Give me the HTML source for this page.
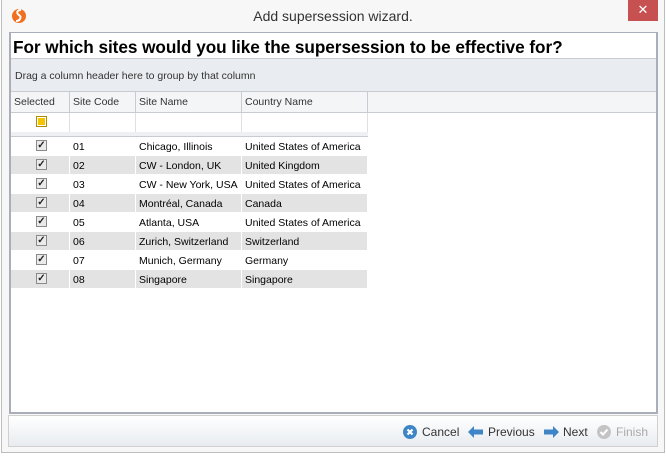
<!DOCTYPE html>
<html><head><style>
*{margin:0;padding:0;box-sizing:border-box}
body{width:666px;height:457px;background:#fff;font-family:"Liberation Sans",sans-serif;position:relative;overflow:hidden}
.win{position:absolute;left:1px;top:0;width:664px;height:453px;border:1px solid #bdbdbd;border-top:none;background:#f7f7f7}
.title{position:absolute;left:0;top:8px;width:666px;text-align:center;font-size:14px;color:#333}
.close{position:absolute;left:628px;top:0;width:30px;height:21px;background:#c75050;color:#fff;text-align:center;font-size:13px;line-height:20px}
.panel{position:absolute;left:9px;top:32px;width:649px;height:382px;border:2px solid #a9aeb8;border-top:1px solid #a9aeb8;background:#fff}
.h1{position:absolute;left:2px;top:4px;font-size:17.2px;font-weight:bold;color:#000;letter-spacing:-0.05px}
.group{position:absolute;left:0;top:25px;width:645px;height:34px;background:#e9ecf0;border-top:1px solid #c8ccd2;border-bottom:1px solid #c8ccd2;font-size:10.5px;color:#333;padding:11px 4px}
.hdr{position:absolute;left:0;top:59px;width:645px;height:21px;background:#f4f5f7;border-bottom:1px solid #c8ccd2}
.hdr div,.cell{position:absolute;top:0;height:100%;border-right:1px solid #c8ccd2;font-size:10.5px;color:#333;padding:4px 3px 3px}
.row{position:absolute;left:0;width:357px;height:19px;border-bottom:1px solid #fff}
.row .cell{padding:4px 3px 3px;color:#000;border-right:1px solid #fff}
.g{background:#e3e3e3}
.cb{position:absolute;left:25px;top:3px;width:11px;height:11px;border:1px solid #8a8a8a;background:#eaeaea;font-size:10px;line-height:9px;text-align:center;color:#222;font-weight:bold}
.bar{position:absolute;left:8px;top:415px;width:650px;height:32px;border:1px solid #d0d0d0;background:linear-gradient(#fff,#e8ecf0)}
.btn{position:absolute;top:9px;font-size:12px;color:#333}
</style></head><body>
<div class="win"></div>
<svg style="position:absolute;left:11px;top:7px" width="16" height="18" viewBox="0 0 16 18"><circle cx="8" cy="9" r="7" fill="#f07020"/><path d="M10 3 C6 3 5 6 8 8 C11 10 9 14 5 14" stroke="#fff" stroke-width="2" fill="none"/></svg>
<div class="title">Add supersession wizard.</div>
<div class="close">✕</div>
<div class="panel">
<div class="h1">For which sites would you like the supersession to be effective for?</div>
<div class="group">Drag a column header here to group by that column</div>
<div class="hdr">
<div style="left:0;width:59px">Selected</div><div style="left:59px;width:66px">Site Code</div><div style="left:125px;width:106px">Site Name</div><div style="left:231px;width:126px">Country Name</div>
</div>
<div class="row" style="top:80px;height:19px;border-bottom:none">
<div class="cell" style="left:0;width:59px;border-right:1px solid #e0e0e0"><div class="cb" style="background:#f5c400;border-color:#b08a00;box-shadow:inset 0 0 0 1px #fff"></div></div>
<div class="cell" style="left:59px;width:66px;border-right:1px solid #e0e0e0"></div><div class="cell" style="left:125px;width:106px;border-right:1px solid #e0e0e0"></div><div class="cell" style="left:231px;width:126px;border-right:1px solid #e0e0e0"></div>
</div>
<div style="position:absolute;left:0;top:99px;width:357px;height:5px;background:#eef0f3;border-bottom:1px solid #c8ccd2"></div>
<div class="row" style="top:104px"><div class="cell" style="left:0;width:59px"><div class="cb">✓</div></div><div class="cell" style="left:59px;width:66px">01</div><div class="cell" style="left:125px;width:106px">Chicago, Illinois</div><div class="cell" style="left:231px;width:126px">United States of America</div></div>
<div class="row g" style="top:123px"><div class="cell" style="left:0;width:59px"><div class="cb">✓</div></div><div class="cell" style="left:59px;width:66px">02</div><div class="cell" style="left:125px;width:106px">CW - London, UK</div><div class="cell" style="left:231px;width:126px">United Kingdom</div></div>
<div class="row" style="top:142px"><div class="cell" style="left:0;width:59px"><div class="cb">✓</div></div><div class="cell" style="left:59px;width:66px">03</div><div class="cell" style="left:125px;width:106px">CW - New York, USA</div><div class="cell" style="left:231px;width:126px">United States of America</div></div>
<div class="row g" style="top:161px"><div class="cell" style="left:0;width:59px"><div class="cb">✓</div></div><div class="cell" style="left:59px;width:66px">04</div><div class="cell" style="left:125px;width:106px">Montréal, Canada</div><div class="cell" style="left:231px;width:126px">Canada</div></div>
<div class="row" style="top:180px"><div class="cell" style="left:0;width:59px"><div class="cb">✓</div></div><div class="cell" style="left:59px;width:66px">05</div><div class="cell" style="left:125px;width:106px">Atlanta, USA</div><div class="cell" style="left:231px;width:126px">United States of America</div></div>
<div class="row g" style="top:199px"><div class="cell" style="left:0;width:59px"><div class="cb">✓</div></div><div class="cell" style="left:59px;width:66px">06</div><div class="cell" style="left:125px;width:106px">Zurich, Switzerland</div><div class="cell" style="left:231px;width:126px">Switzerland</div></div>
<div class="row" style="top:218px"><div class="cell" style="left:0;width:59px"><div class="cb">✓</div></div><div class="cell" style="left:59px;width:66px">07</div><div class="cell" style="left:125px;width:106px">Munich, Germany</div><div class="cell" style="left:231px;width:126px">Germany</div></div>
<div class="row g" style="top:237px"><div class="cell" style="left:0;width:59px"><div class="cb">✓</div></div><div class="cell" style="left:59px;width:66px">08</div><div class="cell" style="left:125px;width:106px">Singapore</div><div class="cell" style="left:231px;width:126px">Singapore</div></div>
</div>
<div class="bar">
<svg style="position:absolute;left:394px;top:9px" width="14" height="14"><circle cx="7" cy="7" r="7" fill="#3d85c6"/><path d="M4.5 4.5L9.5 9.5M9.5 4.5L4.5 9.5" stroke="#fff" stroke-width="2.2"/></svg>
<span class="btn" style="left:413px">Cancel</span>
<svg style="position:absolute;left:459px;top:10px" width="16" height="12"><path d="M0 6L6 0V3.5H15V8.5H6V12Z" fill="#3d85c6"/></svg>
<span class="btn" style="left:479px">Previous</span>
<svg style="position:absolute;left:534px;top:10px" width="16" height="12"><path d="M16 6L10 0V3.5H1V8.5H10V12Z" fill="#3d85c6"/></svg>
<span class="btn" style="left:554px">Next</span>
<svg style="position:absolute;left:588px;top:9px" width="14" height="14"><circle cx="7" cy="7" r="7" fill="#c4c4c4"/><path d="M3.5 7L6 9.5L10.5 4.5" stroke="#fff" stroke-width="2" fill="none"/></svg>
<span class="btn" style="left:607px;color:#aaa">Finish</span>
</div>
</body></html>
